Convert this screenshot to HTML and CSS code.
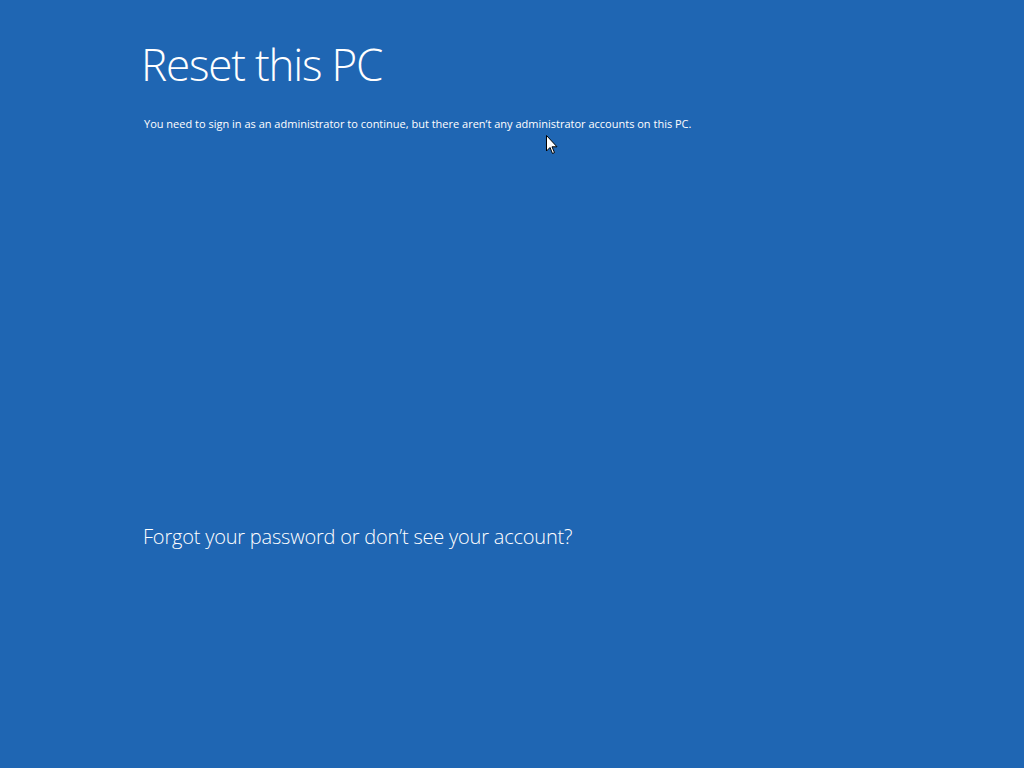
FILE: index.html
```html
<!DOCTYPE html>
<html lang="en">
<head>
    <meta charset="UTF-8">
    <title>Reset this PC</title>
    <link rel="stylesheet" href="styles.css">
</head>
<body>
    <div class="screen">
        <h1 class="title">Reset this PC</h1>
        <p class="message">You need to sign in as an administrator to continue, but there aren’t any administrator accounts on this PC.</p>

        <a class="link" href="#">Forgot your password or don’t see your account?</a>

        <!-- mouse pointer -->
        <svg class="cursor" width="12" height="20" viewBox="0 0 12 20">
            <path d="M0.5 0.5 L0.5 16 L4 12.5 L6.5 18.5 L8.5 17.6 L6 11.8 L11 11.8 Z" fill="#fff" stroke="#000" stroke-width="1"/>
        </svg>
    </div>
</body>
</html>
```

FILE: styles.css
```css
html, body {
    margin: 0;
    padding: 0;
    height: 100%;
}

body {
    background-color: #1f66b3;
    font-family: "Open Sans", "Noto Sans", sans-serif;
    color: #fff;
}

.screen {
    position: relative;
    height: 768px;
    padding-left: 141px;
    box-sizing: border-box;
    overflow: hidden;
}

.title {
    margin: 0;
    padding-top: 33px;
    font-size: 44px;
    font-weight: 300;
    letter-spacing: -1.2px;
    line-height: 62px;
}

.message {
    margin: 21px 0 0 3px;
    font-size: 11px;
    line-height: 16px;
}

.link {
    display: block;
    margin: 391px 0 0 2px;
    font-size: 20px;
    font-weight: 300;
    letter-spacing: -0.2px;
    line-height: 28px;
    color: #fff;
    text-decoration: none;
}

.cursor {
    position: absolute;
    left: 546px;
    top: 135px;
}
```
